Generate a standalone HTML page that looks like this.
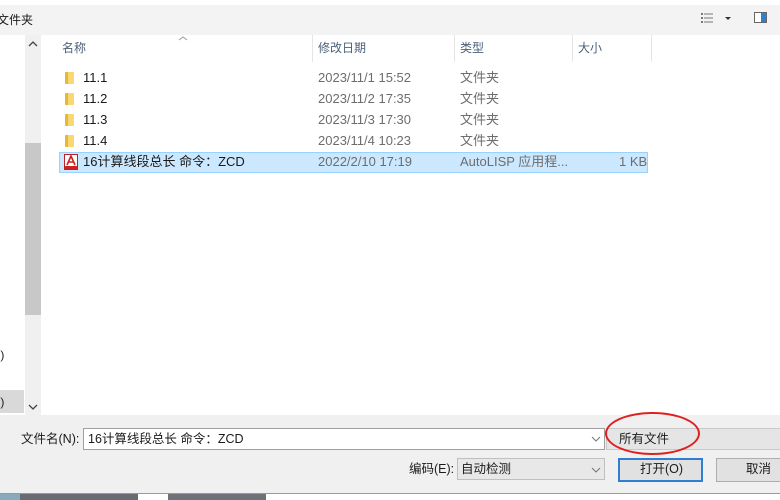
<!DOCTYPE html>
<html><head><meta charset="utf-8"><style>
*{margin:0;padding:0;box-sizing:border-box}
body{width:780px;height:500px;overflow:hidden;background:#fff;font-family:"Liberation Sans","Noto Sans CJK SC",sans-serif;font-size:12px;color:#1a1a1a;position:relative}
.a{position:absolute}
.t{position:absolute;white-space:nowrap;line-height:16px;height:16px}
.hd{color:#4c607a}
.gray{color:#6d6d6d;font-size:13px}
.fold{position:absolute;width:9px;height:12px;background:linear-gradient(90deg,#e8b830 0 35%,#f8d775 35%);border-radius:1px}
</style></head><body>
<div class="a" style="left:0;top:0;width:780px;height:5px;background:#fff"></div>
<div class="a" style="left:0;top:5px;width:780px;height:30px;background:#f3f3f3"></div>
<div class="t" style="left:-3px;top:12px;font-size:12px">文件夹</div>
<svg class="a" style="left:700px;top:12px" width="40" height="14"><g fill="#777"><rect x="1" y="1" width="2" height="2"/><rect x="1" y="5" width="2" height="2"/><rect x="1" y="9" width="2" height="2"/><rect x="4" y="1.5" width="9" height="1"/><rect x="4" y="5.5" width="9" height="1"/><rect x="4" y="9.5" width="9" height="1"/></g><path d="M25 5h6l-3 3z" fill="#333"/></svg>
<svg class="a" style="left:754px;top:12px" width="14" height="12"><rect x="0.5" y="0.5" width="12" height="10" fill="#fff" stroke="#666"/><rect x="7" y="1" width="5" height="9" fill="#2f7fd0"/></svg>
<div class="a" style="left:25px;top:35px;width:16px;height:380px;background:#f0f0f0"></div>
<div class="a" style="left:25px;top:143px;width:16px;height:172px;background:#c8c8c8"></div>
<svg class="a" style="left:28px;top:40px" width="10" height="8"><path d="M1 6l4-4 4 4" stroke="#444" fill="none" stroke-width="1.3"/></svg>
<svg class="a" style="left:28px;top:403px" width="10" height="8"><path d="M1 2l4 4 4-4" stroke="#444" fill="none" stroke-width="1.3"/></svg>
<div class="a" style="left:0;top:390px;width:24px;height:23px;background:#d9d9d9"></div>
<div class="t" style="left:-3px;top:347px">:)</div>
<div class="t" style="left:-3px;top:394px">:)</div>
<div class="t hd" style="left:62px;top:40px">名称</div>
<svg class="a" style="left:178px;top:35px" width="10" height="6"><path d="M1 5l4-3 4 3" stroke="#999" fill="none"/></svg>
<div class="a" style="left:312px;top:35px;width:1px;height:27px;background:#e5e5e5"></div>
<div class="t hd" style="left:318px;top:40px">修改日期</div>
<div class="a" style="left:454px;top:35px;width:1px;height:27px;background:#e5e5e5"></div>
<div class="t hd" style="left:460px;top:40px">类型</div>
<div class="a" style="left:572px;top:35px;width:1px;height:27px;background:#e5e5e5"></div>
<div class="t hd" style="left:578px;top:40px">大小</div>
<div class="a" style="left:651px;top:35px;width:1px;height:27px;background:#e5e5e5"></div>
<div class="fold" style="left:65px;top:72px"></div><div class="t" style="left:83px;top:70px;font-size:13px">11.1</div><div class="t gray" style="left:318px;top:70px">2023/11/1 15:52</div><div class="t gray" style="left:460px;top:70px">文件夹</div>
<div class="fold" style="left:65px;top:93px"></div><div class="t" style="left:83px;top:91px;font-size:13px">11.2</div><div class="t gray" style="left:318px;top:91px">2023/11/2 17:35</div><div class="t gray" style="left:460px;top:91px">文件夹</div>
<div class="fold" style="left:65px;top:114px"></div><div class="t" style="left:83px;top:112px;font-size:13px">11.3</div><div class="t gray" style="left:318px;top:112px">2023/11/3 17:30</div><div class="t gray" style="left:460px;top:112px">文件夹</div>
<div class="fold" style="left:65px;top:135px"></div><div class="t" style="left:83px;top:133px;font-size:13px">11.4</div><div class="t gray" style="left:318px;top:133px">2023/11/4 10:23</div><div class="t gray" style="left:460px;top:133px">文件夹</div>
<div class="a" style="left:59px;top:152px;width:589px;height:21px;background:#cce8ff;border:1px solid #99d1ff"></div>
<svg class="a" style="left:64px;top:154px" width="14" height="16"><rect x="0.5" y="0.5" width="13" height="15" fill="#fff" stroke="#b22"/><path d="M3 11l4-9 4 9M4.5 8h5" stroke="#c22" stroke-width="1.6" fill="none"/><rect x="1" y="12" width="12" height="3" fill="#c22"/></svg>
<div class="t" style="left:83px;top:154px;font-size:13px">16计算线段总长 命令：ZCD</div>
<div class="t gray" style="left:318px;top:154px">2022/2/10 17:19</div>
<div class="t gray" style="left:460px;top:154px">AutoLISP 应用程...</div>
<div class="t gray" style="left:619px;top:154px">1 KB</div>
<div class="a" style="left:0;top:415px;width:780px;height:78px;background:#f0f0f0"></div>
<div class="t" style="left:21px;top:431px;font-size:12.5px">文件名(N):</div>
<div class="a" style="left:83px;top:428px;width:522px;height:22px;background:#fff;border:1px solid #a0a0a0"></div>
<div class="t" style="left:88px;top:431px;font-size:12.5px">16计算线段总长 命令：ZCD</div>
<svg class="a" style="left:591px;top:436px" width="10" height="6"><path d="M1 1l4 4 4-4" stroke="#777" fill="none"/></svg>
<div class="a" style="left:606px;top:428px;width:180px;height:22px;background:#e5e5e5;border:1px solid #c8c8c8"></div>
<div class="t" style="left:619px;top:431px;font-size:12.5px">所有文件</div>
<div class="a" style="left:605px;top:412px;width:95px;height:43px;border:2px solid #e02020;border-radius:50%"></div>
<div class="t" style="left:409px;top:461px;font-size:12.5px">编码(E):</div>
<div class="a" style="left:457px;top:458px;width:148px;height:22px;background:#e8e8e8;border:1px solid #c0c0c0"></div>
<div class="t" style="left:461px;top:461px;font-size:12.5px">自动检测</div>
<svg class="a" style="left:591px;top:467px" width="10" height="6"><path d="M1 1l4 4 4-4" stroke="#777" fill="none"/></svg>
<div class="a" style="left:618px;top:458px;width:85px;height:24px;background:#e1e1e1;border:2px solid #2f7fd0"></div>
<div class="t" style="left:640px;top:461px;font-size:12.5px">打开(O)</div>
<div class="a" style="left:716px;top:458px;width:70px;height:24px;background:#e1e1e1;border:1px solid #adadad"></div>
<div class="t" style="left:746px;top:461px;font-size:12.5px">取消</div>
<div class="a" style="left:0;top:493px;width:780px;height:7px;background:#fff;border-top:1px solid #999"></div>
<div class="a" style="left:0;top:494px;width:20px;height:6px;background:#8ab"></div>
<div class="a" style="left:20px;top:494px;width:118px;height:6px;background:#6a6a72"></div>
<div class="a" style="left:168px;top:494px;width:98px;height:6px;background:#707078"></div>
</body></html>
